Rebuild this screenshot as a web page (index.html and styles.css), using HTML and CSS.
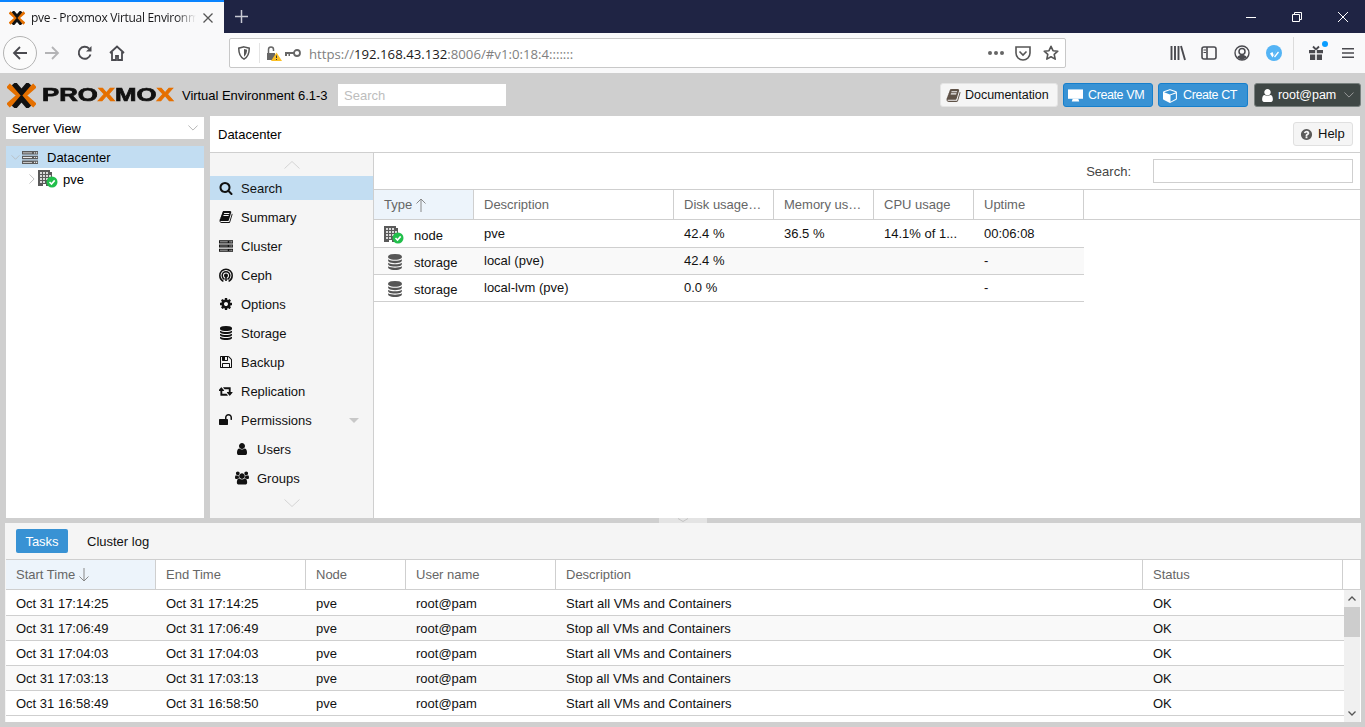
FILE: index.html
```html
<!DOCTYPE html>
<html lang="en">
<head>
<meta charset="utf-8">
<title>pve - Proxmox Virtual Environment</title>
<link rel="stylesheet" href="styles.css">
</head>
<body>
<svg class="sprite" aria-hidden="true">
  <symbol id="i-search" viewBox="0 0 1792 1792"><path d="M1216 832q0-185-131.500-316.500t-316.500-131.500-316.500 131.500-131.500 316.500 131.500 316.500 316.500 131.500 316.500-131.500 131.500-316.500zm512 832q0 52-38 90t-90 38q-54 0-90-38l-343-342q-179 124-399 124-143 0-273.500-55.500t-225-150-150-225-55.500-273.500 55.500-273.500 150-225 225-150 273.500-55.500 273.500 55.500 225 150 150 225 55.500 273.500q0 220-124 399l343 343q37 37 37 90z"/></symbol>
  <symbol id="i-book" viewBox="0 0 1792 1792"><path d="M1703 478q40 57 18 129l-275 906q-19 64-76.500 107.500t-122.500 43.500h-923q-77 0-148.500-53.500t-99.500-131.500q-24-67-2-127 0-4 3-27t4-37q1-8-3-21.500t-3-19.500q2-11 8-21t16.500-23.500 16.500-23.500q23-38 45-91.500t30-91.500q3-10 .5-30t-.5-28q3-11 17-28t17-23q21-36 42-92t25-90q1-9-2.500-32t.5-28q4-13 22-30.500t22-22.500q19-26 42.500-84.500t27.500-96.500q1-8-3-25.500t-2-26.500q2-8 9-18t18-23 17-21q8-12 16.500-30.500t15-35 16-36 19.500-32 26.500-23.500 36-11.500 47.500 5.500l-1 3q38-9 51-9h761q74 0 114 56t18 130l-274 906q-36 119-71.500 153.500t-128.500 34.500h-869q-27 0-38 15-11 16-1 43 24 70 144 70h923q29 0 56-15.500t35-41.500l300-987q7-22 5-57 38 15 59 43zm-1064 2q-4 13 2 22.500t20 9.500h608q13 0 25.500-9.500t16.500-22.500l21-64q4-13-2-22.500t-20-9.500h-608q-13 0-25.500 9.500t-16.500 22.500zm-83 256q-4 13 2 22.500t20 9.500h608q13 0 25.500-9.500t16.500-22.500l21-64q4-13-2-22.500t-20-9.500h-608q-13 0-25.500 9.500t-16.500 22.500z"/></symbol>
  <symbol id="i-server" viewBox="0 0 16 13"><path d="M0 0h16v3.500H0zM0 4.700h16v3.600H0zM0 9.500h16V13H0z"/><path fill="#e8e8e8" d="M1 1.400h9v.8H1zM12 1.200h1.200v1.200H12zM14 1.200h1.200v1.200H14zM1 6.100h9v.8H1zM12 5.900h1.200v1.200H12zM14 5.900h1.200v1.200H14zM1 10.900h9v.8H1zM12 10.700h1.200v1.200H12zM14 10.700h1.200v1.200H14z"/></symbol>
  <symbol id="i-ceph" viewBox="0 0 14 14"><g fill="none" stroke="currentColor" stroke-width="1.500" stroke-linecap="round"><path d="M3.800 13C1.800 11.800.8 9.800.8 7.400a6.200 6.200 0 0 1 12.400 0c0 2.400-1 4.400-3 5.600"/><path d="M5 11C3.800 10.300 3.200 9 3.200 7.500a3.800 3.800 0 0 1 7.600 0c0 1.500-.6 2.800-1.800 3.500"/></g><path d="M7 5.500a2 2 0 0 1 2 2c0 1-.7 1.700-1.200 2V13H6.200V9.500C5.700 9.200 5 8.500 5 7.500a2 2 0 0 1 2-2z"/></symbol>
  <symbol id="i-cog" viewBox="0 0 1792 1792"><path d="M1152 896q0-106-75-181t-181-75-181 75-75 181 75 181 181 75 181-75 75-181zm512-109v222q0 12-8 23t-20 13l-185 28q-19 54-39 91 35 50 107 138 10 12 10 25t-9 23q-27 37-99 108t-94 71q-12 0-26-9l-138-108q-44 23-91 38-16 136-29 186-7 28-36 28h-222q-14 0-24.500-8.500t-11.500-21.500l-28-184q-49-16-90-37l-141 107q-10 9-25 9-14 0-25-11-126-114-165-168-7-10-7-23 0-12 8-23 15-21 51-66.500t54-70.500q-27-50-41-99l-183-27q-13-2-21-12.500t-8-23.500v-222q0-12 8-23t19-13l186-28q14-46 39-92-40-57-107-138-10-12-10-24 0-10 9-23 26-36 98.500-107.500t94.500-71.500q13 0 26 10l138 107q44-23 91-38 16-136 29-186 7-28 36-28h222q14 0 24.500 8.500t11.500 21.500l28 184q49 16 90 37l142-107q9-9 24-9 13 0 25 10 129 119 165 170 7 8 7 22 0 12-8 23-15 21-51 66.500t-54 70.500q26 50 41 98l183 28q13 2 21 12.500t8 23.500z"/></symbol>
  <symbol id="i-db" viewBox="0 0 1792 1792"><path d="M896 768q237 0 443-43t325-127v170q0 69-103 128t-280 93.500-385 34.500-385-34.500-280-93.500-103-128v-170q119 84 325 127t443 43zm0 768q237 0 443-43t325-127v170q0 69-103 128t-280 93.500-385 34.500-385-34.500-280-93.500-103-128v-170q119 84 325 127t443 43zm0-384q237 0 443-43t325-127v170q0 69-103 128t-280 93.500-385 34.500-385-34.500-280-93.500-103-128v-170q119 84 325 127t443 43zm0-1152q208 0 385 34.500t280 93.500 103 128v128q0 69-103 128t-280 93.500-385 34.500-385-34.500-280-93.500-103-128v-128q0-69 103-128t280-93.500 385-34.500z"/></symbol>
  <symbol id="i-floppy" viewBox="0 0 1792 1792"><path d="M512 1536h768v-384h-768v384zm896 0h128v-896q0-14-10-38.500t-20-34.500l-281-281q-10-10-34-20t-39-10v416q0 40-28 68t-68 28h-576q-40 0-68-28t-28-68v-416h-128v1280h128v-416q0-40 28-68t68-28h832q40 0 68 28t28 68v416zm-384-928v-320q0-13-9.500-22.500t-22.500-9.500h-192q-13 0-22.500 9.500t-9.500 22.500v320q0 13 9.500 22.500t22.500 9.500h192q13 0 22.500-9.500t9.500-22.500zm640 32v928q0 40-28 68t-68 28h-1344q-40 0-68-28t-28-68v-1344q0-40 28-68t68-28h928q40 0 88 20t76 48l280 280q28 28 48 76t20 88z"/></symbol>
  <symbol id="i-retweet" viewBox="0 0 1920 1792"><path d="M1216 1504q0 13-9.500 22.500t-22.500 9.500h-960q-8 0-13.500-2t-9-7-5.500-8-3-11.500-1-11.500v-600h-192q-26 0-45-19t-19-45q0-24 15-41l320-384q19-22 49-22t49 22l320 384q15 17 15 41 0 26-19 45t-45 19h-192v384h576q16 0 25 11l160 192q7 10 7 21zm640-416q0 24-15 41l-320 384q-20 23-49 23t-49-23l-320-384q-15-17-15-41 0-26 19-45t45-19h192v-384h-576q-16 0-25-12l-160-192q-7-9-7-20 0-13 9.500-22.500t22.500-9.500h960q8 0 13.500 2t9 7 5.500 8 3 11.500 1 11.500v600h192q26 0 45 19t19 45z"/></symbol>
  <symbol id="i-unlock" viewBox="0 0 1792 1792"><path d="M1664 576v256q0 26-19 45t-45 19h-64q-26 0-45-19t-19-45v-256q0-106-75-181t-181-75-181 75-75 181v192h96q40 0 68 28t28 68v576q0 40-28 68t-68 28h-960q-40 0-68-28t-28-68v-576q0-40 28-68t68-28h672v-192q0-185 131.500-316.500t316.500-131.500 316.500 131.500 131.500 316.500z"/></symbol>
  <symbol id="i-user" viewBox="0 0 1792 1792"><path d="M1536 1399q0 109-62.500 187t-150.500 78h-854q-88 0-150.500-78t-62.500-187q0-85 8.500-160.500t31.500-152 58.500-131 94-89 134.500-34.500q131 128 313 128t313-128q76 0 134.500 34.500t94 89 58.500 131 31.500 152 8.500 160.500zm-256-887q0 159-112.500 271.500t-271.500 112.500-271.500-112.500-112.500-271.500 112.500-271.500 271.500-112.500 271.500 112.500 112.500 271.500z"/></symbol>
  <symbol id="i-users" viewBox="0 0 1920 1792"><path d="M593 896q-162 5-265 128h-134q-82 0-138-40.500t-56-118.500q0-353 124-353 6 0 43.500 21t97.500 42.500 119 21.500q67 0 133-23-5 37-5 66 0 139 81 256zm1071 637q0 120-73 189.500t-194 69.500h-874q-121 0-194-69.500t-73-189.500q0-53 3.500-103.500t14-109 26.500-108.500 43-97.500 62-81 85.500-53.500 111.500-20q10 0 43 21.500t73 48 107 48 135 21.500 135-21.500 107-48 73-48 43-21.500q61 0 111.500 20t85.500 53.500 62 81 43 97.500 26.500 108.500 14 109 3.500 103.500zm-1024-1277q0 106-75 181t-181 75-181-75-75-181 75-181 181-75 181 75 75 181zm704 384q0 159-112.500 271.500t-271.500 112.500-271.500-112.500-112.500-271.500 112.500-271.500 271.500-112.500 271.500 112.500 112.500 271.500zm576 225q0 78-56 118.500t-138 40.500h-134q-103-123-265-128 81-117 81-256 0-29-5-66 66 23 133 23 59 0 119-21.500t97.500-42.500 43.500-21q124 0 124 353zm-128-609q0 106-75 181t-181 75-181-75-75-181 75-181 181-75 181 75 75 181z"/></symbol>
  <symbol id="i-help" viewBox="0 0 1792 1792"><path d="M1024 1376v-192q0-14-9-23t-23-9h-192q-14 0-23 9t-9 23v192q0 14 9 23t23 9h192q14 0 23-9t9-23zm256-672q0-88-55.500-163t-138.500-116-170-41q-243 0-371 213-15 24 8 42l132 100q7 6 19 6 16 0 25-12 53-68 86-92 34-24 86-24 48 0 85.500 26t37.500 59q0 38-20 61t-68 45q-63 28-115.500 86.500t-52.500 125.500v36q0 14 9 23t23 9h192q14 0 23-9t9-23q0-19 21.500-49.500t54.500-49.500q32-18 49-28.500t46-35 44.500-48 28-60.500 12.500-81zm384 192q0 209-103 385.500t-279.500 279.500-385.500 103-385.500-103-279.500-279.500-103-385.500 103-385.500 279.500-279.500 385.500-103 385.500 103 279.500 279.500 103 385.500z"/></symbol>
  <symbol id="i-cube" viewBox="0 0 1792 1792"><path d="M896 1629l640-349v-636l-640 233v752zm-64-865l698-254-698-254-698 254zm832-252v768q0 35-18 65t-49 47l-704 384q-28 16-61 16t-61-16l-704-384q-31-17-49-47t-18-65v-768q0-40 23-73t61-47l704-256q22-8 44-8t44 8l704 256q38 14 61 47t23 73z"/></symbol>
  <symbol id="i-node" viewBox="0 0 20 18"><path fill="#5a5a5a" d="M0 0h12v2h2v14H0z"/><path fill="#d9d9d9" d="M2 2h2v2H2zM5 2h2v2H5zM8 2h2v2H8zM2 5h2v2H2zM5 5h2v2H5zM8 5h2v2H8zM11 5h2v2h-2zM2 8h2v2H2zM5 8h2v2H5zM8 8h2v2H8zM11 8h2v2h-2zM2 11h2v2H2zM5 11h2v2H5z"/><path fill="#fff" d="M5 14h3v2H5z"/><circle cx="14" cy="12" r="5.500" fill="#21bf4b"/><path d="M11.500 12l2 2 3.200-3.600" fill="none" stroke="#fff" stroke-width="1.600"/></symbol>
  <symbol id="i-xlogo" viewBox="0 0 30 26"><g fill="none" stroke-width="5.400"><path stroke="#e57000" d="M1 2.500L13 13 1 23.500M29 2.500L17 13l12 10.500"/><path stroke="#111" d="M7 .5l8 9.300L23 .5M7 25.500l8-9.300 8 9.300"/></g></symbol>
  <symbol id="i-chev-d" viewBox="0 0 12 7"><path d="M.5.5L6 6 11.500.5" fill="none" stroke="currentColor"/></symbol>
  <symbol id="i-chev-r" viewBox="0 0 7 12"><path d="M.5.5L6 6 .5 11.500" fill="none" stroke="currentColor"/></symbol>
</svg>

<div class="browser">
  <div class="tabstrip">
    <div class="tab">
      <svg class="fav"><use href="#i-xlogo"/></svg>
      <span class="tabtitle">pve - Proxmox Virtual Environment</span>
      <svg class="tabclose" viewBox="0 0 10 10"><path d="M.5.5l9 9M9.500.5l-9 9" stroke="#555" stroke-width="1.300"/></svg>
    </div>
    <svg class="newtab" viewBox="0 0 14 14"><path d="M7 0v14M0 7h14" stroke="#c8cad4" stroke-width="1.600"/></svg>
    <div class="winctl">
      <svg viewBox="0 0 10 10"><path d="M0 5.500h10" stroke="#fff"/></svg>
      <svg viewBox="0 0 10 10"><path d="M.5 2.500h7v7h-7zM2.500 2.500v-2h7v7h-2" fill="none" stroke="#fff"/></svg>
      <svg viewBox="0 0 10 10"><path d="M0 0l10 10M10 0L0 10" stroke="#fff"/></svg>
    </div>
  </div>
  <div class="toolbar">
    <div class="backbtn"><svg viewBox="0 0 16 16"><path d="M15 8H2M8 2L2 8l6 6" fill="none" stroke="#4a4a4f" stroke-width="1.800"/></svg></div>
    <svg class="tbicon fwd" viewBox="0 0 16 16"><path d="M1 8h13M8 2l6 6-6 6" fill="none" stroke="#b4b4b6" stroke-width="1.800"/></svg>
    <svg class="tbicon reload" viewBox="0 0 16 16"><path d="M13.500 9.500A6 6 0 1 1 12 3.500" fill="none" stroke="#4a4a4f" stroke-width="1.900"/><path d="M14.500 1v5.500H9z" fill="#4a4a4f"/></svg>
    <svg class="tbicon home" viewBox="0 0 16 16"><path d="M1 8l7-6.500L15 8M3 7v8h4v-4h2v4h4V7" fill="none" stroke="#4a4a4f" stroke-width="1.800"/></svg>
    <div class="urlbar">
      <svg class="shield" viewBox="0 0 16 16"><path d="M8 1l6 1.500c0 6-1.500 10-6 12.500C3.500 12.500 2 8.500 2 2.500z" fill="none" stroke="#555" stroke-width="1.700"/><path d="M8 3.500l3.500.9C11.300 8 10.500 10.500 8 12.300z" fill="#555"/></svg>
      <span class="urlsep"></span>
      <svg class="lock" viewBox="0 0 16 16"><path d="M1 8h8v7H1z" fill="#666"/><path d="M2.500 8V4.500a2.500 2.500 0 0 1 5 0V6" fill="none" stroke="#666" stroke-width="1.500"/><path d="M10.500 7.500L16 16H5z" fill="#fbbf24"/><path d="M10 10.500h1V13h-1zM10 14h1v1h-1z" fill="#333"/></svg>
      <svg class="key" viewBox="0 0 16 8"><circle cx="12" cy="4" r="3" fill="none" stroke="#666" stroke-width="1.800"/><path d="M0 3h9v2H5v2H3.500V5H2v2H0z" fill="#666"/></svg>
      <span class="url"><span class="dim">https://</span>192.168.43.132<span class="dim">:8006/#v1:0:18:4:::::::</span></span>
      <span class="dots"><i></i><i></i><i></i></span>
      <svg class="pocket" viewBox="0 0 16 15"><path d="M1 1h14v6a7 7 0 0 1-14 0z" fill="none" stroke="#555" stroke-width="1.600"/><path d="M4.500 5.500L8 9l3.500-3.500" fill="none" stroke="#555" stroke-width="1.600"/></svg>
      <svg class="star" viewBox="0 0 16 16"><path d="M8 1.300l2 4.400 4.800.5-3.600 3.200 1 4.700L8 11.700l-4.200 2.400 1-4.700L1.200 6.200 6 5.700z" fill="none" stroke="#555" stroke-width="1.600" stroke-linejoin="round"/></svg>
    </div>
    <svg class="tbicon lib" viewBox="0 0 16 16"><path d="M1.500 1v14M5 1v14M8.500 1v14M11 1l4 14" fill="none" stroke="#4a4a4f" stroke-width="1.900"/></svg>
    <svg class="tbicon side" viewBox="0 0 16 14"><rect x="1" y="1" width="14" height="12" rx="2" fill="none" stroke="#4a4a4f" stroke-width="1.600"/><path d="M6 1v12" stroke="#4a4a4f" stroke-width="1.600"/><path d="M2.500 4h2.500M2.500 6.500h2.500" stroke="#4a4a4f"/></svg>
    <svg class="tbicon acct" viewBox="0 0 16 16"><circle cx="8" cy="8" r="7" fill="none" stroke="#4a4a4f" stroke-width="1.400"/><circle cx="8" cy="6.500" r="3" fill="none" stroke="#4a4a4f" stroke-width="1.500"/><path d="M3 12.500c1-2 3-2.500 5-2.500s4 .5 5 2.500L8 15z" fill="#4a4a4f"/></svg>
    <svg class="tbicon ext" viewBox="0 0 16 16"><circle cx="8" cy="8" r="8" fill="#54b4f5"/><path d="M4 8.500l2.500 4L11 4l-2.500 5-.7 1.500L6.500 7zM9 12.500l4-5-1-1-4 5z" fill="#fff"/></svg>
    <span class="tbsep"></span>
    <span class="gift">
      <svg class="tbicon" viewBox="0 0 16 16"><path d="M1 5h6.200v3.200H1zM8.800 5H15v3.200H8.800zM2 9.500h5.200V15H2zM8.800 9.500H14V15H8.800z" fill="#4a4a4f"/><path d="M8 4.500L5 1.500M8 4.500l3-3" stroke="#4a4a4f" stroke-width="1.800"/></svg>
      <i class="badge"></i>
    </span>
    <svg class="tbicon burger" viewBox="0 0 14 12"><path d="M0 1h14M0 6h14M0 11h14" stroke="#4a4a4f" stroke-width="1.700"/></svg>
  </div>
</div>

<div class="app">
  <header class="pvehead">
    <div class="logo">
      <svg class="logox"><use href="#i-xlogo"/></svg>
      <span class="logotext">PRO<b>X</b>MO<b>X</b></span>
    </div>
    <span class="version">Virtual Environment 6.1-3</span>
    <div class="globalsearch">Search</div>
    <button class="btn doc"><svg class="ic"><use href="#i-book"/></svg>Documentation</button>
    <button class="btn blue"><svg class="ic monitor" viewBox="0 0 16 15"><path d="M0 1h16v10H0z" fill="#fff"/><path d="M5 11h6l1 3H4z" fill="#fff"/></svg>Create VM</button>
    <button class="btn blue"><svg class="ic"><use href="#i-cube"/></svg>Create CT</button>
    <button class="btn usermenu"><svg class="ic"><use href="#i-user"/></svg>root@pam<svg class="chev"><use href="#i-chev-d"/></svg></button>
  </header>

  <div class="workspace">
    <aside class="leftcol">
      <div class="viewsel">Server View<svg class="chev"><use href="#i-chev-d"/></svg></div>
      <div class="tree">
        <div class="treerow selected"><svg class="exp-d"><use href="#i-chev-d"/></svg><svg class="srv"><use href="#i-server"/></svg><span>Datacenter</span></div>
        <div class="treerow child"><svg class="exp-r"><use href="#i-chev-r"/></svg><svg class="nodeic"><use href="#i-node"/></svg><span>pve</span></div>
      </div>
    </aside>

    <main class="content">
      <div class="contenthead"><span>Datacenter</span><button class="helpbtn"><svg class="ic"><use href="#i-help"/></svg>Help</button></div>
      <div class="contentbody">
        <nav class="menu">
          <div class="menuarrow up"><svg viewBox="0 0 16 8"><path d="M.5 7.500L8 .5l7.500 7" fill="none" stroke="#d4d4d4"/></svg></div>
          <div class="mitem active"><svg class="ic"><use href="#i-search"/></svg>Search</div>
          <div class="mitem"><svg class="ic"><use href="#i-book"/></svg>Summary</div>
          <div class="mitem"><svg class="ic"><use href="#i-server"/></svg>Cluster</div>
          <div class="mitem"><svg class="ic"><use href="#i-ceph"/></svg>Ceph</div>
          <div class="mitem"><svg class="ic"><use href="#i-cog"/></svg>Options</div>
          <div class="mitem"><svg class="ic"><use href="#i-db"/></svg>Storage</div>
          <div class="mitem"><svg class="ic"><use href="#i-floppy"/></svg>Backup</div>
          <div class="mitem"><svg class="ic"><use href="#i-retweet"/></svg>Replication</div>
          <div class="mitem">
            <svg class="ic"><use href="#i-unlock"/></svg>Permissions
            <svg class="collapse" viewBox="0 0 10 5"><path d="M0 0h10L5 5z" fill="#c8c8c8"/></svg>
          </div>
          <div class="mitem sub"><svg class="ic"><use href="#i-user"/></svg>Users</div>
          <div class="mitem sub"><svg class="ic"><use href="#i-users"/></svg>Groups</div>
          <div class="menuarrow down"><svg viewBox="0 0 16 8"><path d="M.5.5L8 7.500l7.500-7" fill="none" stroke="#d4d4d4"/></svg></div>
        </nav>
        <section class="searchpane">
          <div class="searchbar"><label>Search:</label><div class="searchinput"></div></div>
          <div class="ghead rescols">
            <div class="hc sorted">Type <svg class="sort" viewBox="0 0 10 14"><path d="M5 14V1M.5 5.500L5 1l4.500 4.500" fill="none" stroke="#888"/></svg></div>
            <div class="hc">Description</div>
            <div class="hc">Disk usage…</div>
            <div class="hc">Memory us…</div>
            <div class="hc">CPU usage</div>
            <div class="hc">Uptime</div>
          </div>
          <div class="rrow rescols tall">
            <div class="rc typecell"><svg class="nodeic"><use href="#i-node"/></svg><span>node</span></div>
            <div class="rc">pve</div><div class="rc">42.4 %</div><div class="rc">36.5 %</div><div class="rc">14.1% of 1...</div><div class="rc">00:06:08</div>
          </div>
          <div class="rrow rescols alt">
            <div class="rc typecell"><svg class="dbic"><use href="#i-db"/></svg><span>storage</span></div>
            <div class="rc">local (pve)</div><div class="rc">42.4 %</div><div class="rc"></div><div class="rc"></div><div class="rc">-</div>
          </div>
          <div class="rrow rescols">
            <div class="rc typecell"><svg class="dbic"><use href="#i-db"/></svg><span>storage</span></div>
            <div class="rc">local-lvm (pve)</div><div class="rc">0.0 %</div><div class="rc"></div><div class="rc"></div><div class="rc">-</div>
          </div>
        </section>
      </div>
    </main>
  </div>

  <div class="splitter"><span class="splithandle"><svg viewBox="0 0 12 4"><path d="M1 .5L6 3.500l5-3" fill="none" stroke="#c4c4c4"/></svg></span></div>

  <section class="logpanel">
    <div class="logtabs"><button class="logtab on">Tasks</button><button class="logtab">Cluster log</button></div>
    <div class="ghead logcols">
      <div class="hc sorted">Start Time <svg class="sort" viewBox="0 0 10 14"><path d="M5 0v13M.5 8.500L5 13l4.500-4.500" fill="none" stroke="#888"/></svg></div>
      <div class="hc">End Time</div>
      <div class="hc">Node</div>
      <div class="hc">User name</div>
      <div class="hc">Description</div>
      <div class="hc">Status</div>
      <div class="hc"></div>
    </div>
    <div class="logbody">
      <div class="logrows">
        <div class="lrow logcols first"><div>Oct 31 17:14:25</div><div>Oct 31 17:14:25</div><div>pve</div><div>root@pam</div><div>Start all VMs and Containers</div><div>OK</div></div>
        <div class="lrow logcols alt"><div>Oct 31 17:06:49</div><div>Oct 31 17:06:49</div><div>pve</div><div>root@pam</div><div>Stop all VMs and Containers</div><div>OK</div></div>
        <div class="lrow logcols"><div>Oct 31 17:04:03</div><div>Oct 31 17:04:03</div><div>pve</div><div>root@pam</div><div>Start all VMs and Containers</div><div>OK</div></div>
        <div class="lrow logcols alt"><div>Oct 31 17:03:13</div><div>Oct 31 17:03:13</div><div>pve</div><div>root@pam</div><div>Stop all VMs and Containers</div><div>OK</div></div>
        <div class="lrow logcols"><div>Oct 31 16:58:49</div><div>Oct 31 16:58:50</div><div>pve</div><div>root@pam</div><div>Start all VMs and Containers</div><div>OK</div></div>
      </div>
      <div class="scrollbar">
        <svg class="sb-arrow" viewBox="0 0 8 5"><path d="M.5 4.500L4 1l3.500 3.500" fill="none" stroke="#555" stroke-width="1.300"/></svg>
        <span class="sb-thumb"></span>
        <svg class="sb-arrow end" viewBox="0 0 8 5"><path d="M.5.500L4 4 7.500.5" fill="none" stroke="#555" stroke-width="1.300"/></svg>
      </div>
    </div>
  </section>
</div>
</body>
</html>
```
FILE: styles.css
```css
* { box-sizing: border-box; }
html, body { margin: 0; height: 727px; overflow: hidden; }
body { font: 13px/16px "Liberation Sans", Arial, sans-serif; color: #000; background: #cfcfcf; }
button { font: inherit; padding: 0; margin: 0; }
svg { display: block; flex: none; }
.sprite { position: absolute; width: 0; height: 0; }

/* browser chrome */
.tabstrip { display: flex; align-items: center; height: 33px; background: #1f2444; }
.tab { display: flex; align-items: center; width: 224px; height: 33px; padding: 0 0 0 9px; background: #f9f9fa; border-top: 2px solid #0a84ff; }
.fav { width: 16px; height: 14px; }
.tabtitle { width: 165px; margin-left: 6px; font: 12px/16px "Open Sans", sans-serif; letter-spacing: -.3px; color: #18181a; white-space: nowrap; overflow: hidden; -webkit-mask-image: linear-gradient(to right, #000 88%, transparent); mask-image: linear-gradient(to right, #000 88%, transparent); }
.tabclose { width: 10px; height: 10px; margin-left: 7px; }
.newtab { width: 13px; height: 13px; margin-left: 11px; }
.winctl { display: flex; margin-left: auto; gap: 36px; padding-right: 17px; }
.winctl svg { width: 10px; height: 10px; }

.toolbar { display: flex; align-items: center; height: 41px; padding-left: 3px; background: #f9f9fa; border-bottom: 1px solid #cfcfcf; }
.backbtn { display: flex; align-items: center; justify-content: center; width: 34px; height: 34px; border: 1px solid #b3b3b3; border-radius: 50%; background: #fbfbfb; }
.backbtn svg { width: 16px; height: 16px; }
.tbicon { width: 16px; height: 16px; }
.fwd { margin-left: 7px; }
.reload { margin-left: 17px; }
.home { margin-left: 16px; }
.urlbar { display: flex; align-items: center; width: 837px; height: 30px; margin-left: 104px; padding: 0 6px 0 6px; background: #fff; border: 1px solid #c8c8c8; border-radius: 2px; }
.shield { width: 14px; height: 14px; margin-left: 1px; }
.urlsep { width: 1px; height: 20px; margin-left: 8px; background: #e4e4e4; }
.lock { width: 16px; height: 16px; margin-left: 6px; }
.key { width: 16px; height: 8px; margin-left: 3px; }
.url { margin-left: 8px; padding-top: 2px; font: 13.2px/18px "Open Sans", sans-serif; color: #1a1a1a; }
.dim { color: #808080; }
.dots { display: flex; gap: 2px; margin-left: auto; }
.dots i { width: 4px; height: 4px; border-radius: 50%; background: #666; }
.pocket { width: 16px; height: 15px; margin-left: 11px; }
.star { width: 16px; height: 16px; margin-left: 12px; }
.lib { margin-left: 104px; }
.side { margin-left: 15px; height: 14px; }
.acct { margin-left: 17px; }
.ext { margin-left: 16px; }
.tbsep { width: 1px; height: 33px; margin-left: 11px; background: #dcdcdc; }
.gift { position: relative; margin-left: 14px; }
.badge { position: absolute; top: -4px; right: -4px; width: 6px; height: 6px; border-radius: 50%; background: #0a9dff; }
.burger { width: 12px; height: 12px; margin-left: 18px; }

/* proxmox header */
.app { display: flex; flex-direction: column; height: 653px; }
.pvehead { display: flex; align-items: center; gap: 5px; height: 42px; padding: 0 4px 0 7px; }
.logo { display: flex; align-items: center; width: 170px; }
.logox { width: 29px; height: 25px; }
.logotext { display: inline-block; margin-left: 6px; font: 900 18px/18px "Liberation Sans", sans-serif; color: #111; -webkit-text-stroke: .7px #111; white-space: nowrap; transform: scaleX(1.43); transform-origin: left center; }
.logotext b { color: #e57000; -webkit-text-stroke: .7px #e57000; }
.version { width: 151px; padding-top: 2px; letter-spacing: -.04px; }
.globalsearch { width: 168px; height: 22px; padding: 4px 6px 0; color: #bdbdbd; background: #fff; }
.btn { display: flex; align-items: center; height: 24px; border-radius: 3px; border: 1px solid #ddd; font-size: 12.5px; }
.btn .ic { width: 15px; height: 15px; }
.doc { width: 118px; margin-left: auto; padding-left: 5px; gap: 4px; background: #f5f5f5; border-color: #e4e4e4; color: #111; letter-spacing: -.03px; }
.doc .ic { fill: #5f5247; }
.blue { width: 90px; padding-left: 4px; gap: 5px; background: #3892d4; border-color: #157fcc; color: #fff; letter-spacing: -.4px; }
.blue + .blue { gap: 5px; padding-left: 4px; }
.blue .ic { fill: #fff; }
.usermenu { width: 107px; margin-left: 1px; padding-left: 5px; gap: 3px; background: #3f4745; border-color: #78807e; color: #fff; letter-spacing: -.05px; }
.usermenu .ic { fill: #fff; }
.chev { width: 10px; height: 6px; margin-left: auto; color: #aaa; }
.usermenu .chev { margin-right: 6px; }

/* main */
.workspace { display: grid; grid-template-columns: 198px 1150px; gap: 6px; height: 402px; padding-left: 6px; }
.leftcol { display: flex; flex-direction: column; gap: 7px; padding-top: 1px; }
.viewsel { display: flex; align-items: center; height: 22px; padding: 2px 6px 0; font-size: 12.8px; background: #fff; }
.viewsel .chev { margin-top: -2px; }
.tree { flex: 1; background: #fff; }
.treerow { display: flex; align-items: center; height: 22px; }
.treerow.selected { background: #c2ddf2; }
.exp-d { width: 9px; height: 5px; margin-left: 5px; color: #b5b5b5; }
.srv { width: 16px; height: 13px; margin-left: 2px; fill: #5c5c5c; }
.treerow.selected span { margin-left: 9px; padding-top: 2px; }
.exp-r { width: 6px; height: 10px; margin-left: 23px; color: #b5b5b5; }
.nodeic { width: 20px; height: 18px; }
.child .nodeic { margin-left: 3px; }
.child span { margin-left: 5px; padding-bottom: 2px; }

.content { display: flex; flex-direction: column; background: #fff; }
.contenthead { display: flex; align-items: center; justify-content: space-between; height: 37px; padding: 0 7px 0 8px; border-bottom: 1px solid #cfcfcf; }
.contenthead > span { padding-top: 2px; }
.helpbtn { display: flex; align-items: center; gap: 5px; width: 60px; height: 24px; padding-left: 6px; background: #f5f5f5; border: 1px solid #e0e0e0; border-radius: 3px; color: #111; }
.helpbtn .ic { width: 13px; height: 13px; fill: #5a5a5a; }
.contentbody { display: flex; flex: 1; min-height: 0; }

.menu { display: flex; flex-direction: column; gap: 5px; width: 164px; background: #f5f5f5; border-right: 1px solid #cfcfcf; }
.menuarrow { display: flex; justify-content: center; }
.menuarrow svg { width: 16px; height: 8px; }
.menuarrow.up { height: 18px; padding-top: 8px; }
.menuarrow.down { padding-top: 4px; }
.mitem { display: flex; align-items: center; flex: none; gap: 8px; height: 24px; padding: 2px 0 0 9px; color: #111; }
.mitem .ic { width: 14px; height: 14px; margin-top: -2px; fill: #111; color: #111; }
.mitem.active { background: #c2ddf2; }
.mitem.sub { padding-left: 25px; }
.collapse { width: 10px; height: 5px; margin: -2px 14px 0 auto; }

.searchpane { flex: 1; min-width: 0; }
.searchbar { display: flex; align-items: center; height: 37px; padding-right: 7px; border-bottom: 1px solid #cfcfcf; }
.searchbar label { margin-left: auto; padding-top: 2px; color: #444; }
.searchinput { width: 200px; height: 24px; margin-left: 22px; border: 1px solid #cfcfcf; }

.ghead { display: grid; height: 30px; border-bottom: 1px solid #cfcfcf; }
.hc { display: flex; align-items: center; gap: 4px; padding-left: 10px; color: #666; border-right: 1px solid #cfcfcf; }
.sorted { background: #edf4fb; }
.sort { width: 10px; height: 14px; }
.rescols { display: grid; grid-template-columns: 100px 200px 100px 100px 100px 110px; }
.ghead.rescols .hc { height: 29px; }
.rrow { width: 710px; height: 27px; border-bottom: 1px solid #cfcfcf; }
.rrow.tall { height: 28px; }
.rrow.alt { background: #f9f9f9; }
.rc { padding: 5px 0 0 10px; white-space: nowrap; overflow: hidden; color: #111; }
.tall .rc { padding-top: 6px; }
.typecell { display: flex; align-items: center; gap: 10px; height: 26px; }
.rc.typecell { padding: 3px 0 0 10px; }
.alt .rc.typecell, .rrow:last-child .rc.typecell { padding-top: 1px; }
.dbic { width: 16px; height: 16px; margin-left: 3px; fill: #555; }
.dbic + span { margin-left: 1px; padding-top: 3px; }
.nodeic + span { padding-top: 3px; }

.splitter { display: flex; justify-content: center; height: 5px; }
.splithandle { display: flex; justify-content: center; width: 48px; height: 5px; background: #e4e4e4; margin-left: 1px; }
.splithandle svg { width: 12px; height: 4px; }

.logpanel { display: flex; flex-direction: column; width: 1356px; height: 199px; margin-left: 5px; background: #f5f5f5; }
.logtabs { display: flex; align-items: center; gap: 19px; height: 36px; padding-left: 11px; }
.logtab { height: 24px; padding-top: 2px; background: none; border: 0; color: #111; }
.logtab.on { width: 52px; background: #3892d4; color: #fff; border-radius: 2px; }
.logcols { grid-template-columns: 150px 150px 100px 150px 587px 200px 18px; }
.logpanel > .ghead { display: grid; height: 31px; margin-left: 1px; width: 1355px; background: #fff; border-top: 1px solid #cfcfcf; }
.logbody { display: flex; flex: 1; min-height: 0; margin-left: 1px; width: 1355px; background: #fff; }
.logrows { width: 1338px; }
.lrow { display: grid; height: 25px; padding-top: 5px; border-bottom: 1px solid #cfcfcf; color: #111; }
.lrow.first { height: 26px; padding-top: 6px; }
.lrow.alt { background: #f9f9f9; }
.lrow > div { padding-left: 10px; }
.scrollbar { display: flex; flex-direction: column; align-items: center; width: 16px; background: #f0f0f0; }
.sb-arrow { width: 8px; height: 5px; margin-top: 6px; }
.sb-arrow.end { margin-top: auto; margin-bottom: 6px; }
.sb-thumb { width: 100%; height: 30px; margin-top: 6px; background: #cdcdcd; }
```
